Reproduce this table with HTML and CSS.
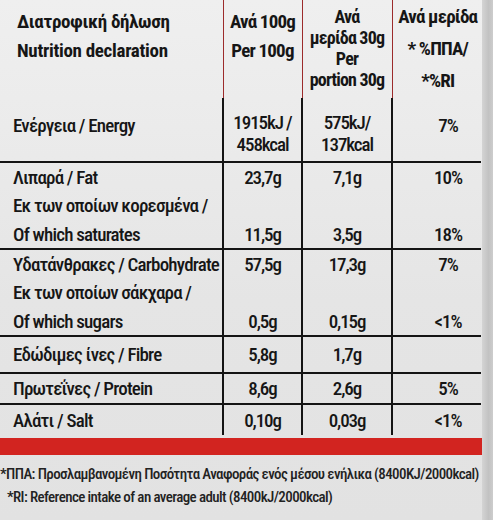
FILE: index.html
```html
<!DOCTYPE html>
<html lang="el">
  <head>
    <meta charset="UTF-8" />
    <meta name="viewport" content="width=device-width, initial-scale=1.0" />
    <title>Nutrition declaration</title>
    <link rel="stylesheet" href="styles.css">
  </head>
  <body>
    <div class="label">
      <div class="panel">
        <table class="facts">
          <colgroup>
            <col class="c-name" />
            <col class="c-100" />
            <col class="c-portion" />
            <col class="c-ri" />
          </colgroup>
          <thead>
            <tr class="head">
              <th class="name">
                <div class="h-lines">Διατροφική δήλωση<br />Nutrition declaration</div>
              </th>
              <th>
                <div class="h-lines">Ανά 100g<br />Per 100g</div>
              </th>
              <th>
                <div class="h-tight">Ανά<br />μερίδα 30g<br />Per<br />portion 30g</div>
              </th>
              <th>
                <div class="h-ri">Ανά μερίδα<br />* %ΠΠΑ/<br />*%RI</div>
              </th>
            </tr>
          </thead>
          <tbody>
            <tr class="energy">
              <td class="name">Ενέργεια / Energy</td>
              <td><div class="two">1915kJ /<br />458kcal</div></td>
              <td><div class="two">575kJ/<br />137kcal</div></td>
              <td class="pct">7%</td>
            </tr>

            <!-- λιπαρά -->
            <tr class="grp first">
              <td class="name">Λιπαρά / Fat</td>
              <td>23,7g</td>
              <td>7,1g</td>
              <td class="pct">10%</td>
            </tr>
            <tr class="grp">
              <td class="name">Εκ των οποίων κορεσμένα /</td>
              <td></td>
              <td></td>
              <td></td>
            </tr>
            <tr class="grp">
              <td class="name">Of which saturates</td>
              <td>11,5g</td>
              <td>3,5g</td>
              <td class="pct">18%</td>
            </tr>

            <!-- υδατάνθρακες -->
            <tr class="grp first">
              <td class="name">Υδατάνθρακες / Carbohydrate</td>
              <td>57,5g</td>
              <td>17,3g</td>
              <td class="pct">7%</td>
            </tr>
            <tr class="grp">
              <td class="name">Εκ των οποίων σάκχαρα /</td>
              <td></td>
              <td></td>
              <td></td>
            </tr>
            <tr class="grp">
              <td class="name">Of which sugars</td>
              <td>0,5g</td>
              <td>0,15g</td>
              <td class="pct">&lt;1%</td>
            </tr>

            <tr class="single fibre">
              <td class="name">Εδώδιμες ίνες / Fibre</td>
              <td>5,8g</td>
              <td>1,7g</td>
              <td class="pct"></td>
            </tr>
            <tr class="single">
              <td class="name">Πρωτεΐνες / Protein</td>
              <td>8,6g</td>
              <td>2,6g</td>
              <td class="pct">5%</td>
            </tr>
            <tr class="single">
              <td class="name">Αλάτι / Salt</td>
              <td>0,10g</td>
              <td>0,03g</td>
              <td class="pct">&lt;1%</td>
            </tr>
          </tbody>
        </table>
        <div class="red-bar"></div>
        <div class="notes">
          <p class="n1">*ΠΠΑ: Προσλαμβανομένη Ποσότητα Αναφοράς ενός μέσου ενήλικα (8400KJ/2000kcal)</p>
          <p class="n2">*RI: Reference intake of an average adult (8400kJ/2000kcal)</p>
        </div>
      </div>
      <div class="edge"></div>
    </div>
  </body>
</html>
```

FILE: styles.css
```css
body {
  margin: 0;
  background: #e6e6e6;
  font-family: "Liberation Sans Narrow", "Roboto Condensed", "DejaVu Sans Condensed", sans-serif;
  color: #161616;
}
.label {
  display: flex;
  width: 493px;
  height: 520px;
  overflow: hidden;
}
.panel {
  width: 482px;
  background: linear-gradient(180deg, #efefef 0, #ececec 98px, #e5e5e5 300px, #e2e2e2 520px);
}
.edge {
  flex: 1;
  background: linear-gradient(90deg, #d4d4d4, #c2c2c2 60%, #cdcdcd);
}

/* table */
.facts {
  width: 481px;
  table-layout: fixed;
  border-collapse: collapse;
  font-size: 19px;
  font-weight: 500;
  letter-spacing: -0.8px;
}
.c-name { width: 223px; }
.c-100 { width: 79px; }
.c-portion { width: 90px; }
.c-ri { width: 89px; }

.facts th,
.facts td {
  padding: 0;
  text-align: center;
  white-space: nowrap;
}
.facts td + td {
  border-left: 2px solid #141414;
  letter-spacing: -1.1px;
}
.facts .name {
  text-align: left;
  padding-left: 13px;
}
.facts .pct {
  padding-left: 22px;
}

/* header */
.head {
  height: 98px;
}
.head th {
  vertical-align: top;
  font-weight: bold;
  letter-spacing: -0.3px;
}
.head th + th {
  border-left: 1px solid #9c2b2b;
  letter-spacing: -0.8px;
}
.head .name {
  padding-left: 17px;
}
.h-lines {
  line-height: 29px;
  padding-top: 7px;
}
.h-tight {
  font-size: 18px;
  line-height: 21px;
  padding-top: 6px;
}
.h-ri {
  line-height: 32px;
  padding-top: 1px;
  padding-left: 2px;
}

/* rows */
.energy {
  height: 64px;
}
.energy td {
  vertical-align: top;
  line-height: 22px;
  padding-top: 17px;
}
.energy .two {
  margin-top: -3px;
}
.grp {
  height: 29px;
}
.grp.first td {
  border-top: 2px solid #141414;
}
.single td {
  border-top: 2px solid #141414;
}
.single {
  height: 31px;
}
.single.fibre {
  height: 37px;
}

.red-bar {
  height: 17px;
  margin-top: 3px;
  width: 483px;
  background: #d22420;
}

/* footnotes */
.notes {
  padding-top: 8px;
  font-size: 15px;
  line-height: 23px;
  font-weight: 500;
  letter-spacing: -0.6px;
  color: #222;
}
.notes p {
  margin: 0;
  white-space: nowrap;
}
.n2 {
  padding-left: 7px;
}
```
